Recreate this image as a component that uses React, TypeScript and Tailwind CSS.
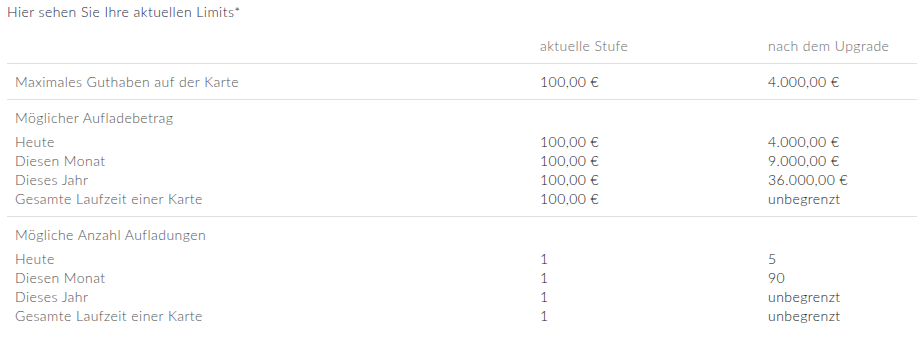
const groups = [
  {
    title: "Möglicher Aufladebetrag",
    rows: [
      ["Heute", "100,00 €", "4.000,00 €"],
      ["Diesen Monat", "100,00 €", "9.000,00 €"],
      ["Dieses Jahr", "100,00 €", "36.000,00 €"],
      ["Gesamte Laufzeit einer Karte", "100,00 €", "unbegrenzt"],
    ],
  },
  {
    title: "Mögliche Anzahl Aufladungen",
    rows: [
      ["Heute", "1", "5"],
      ["Diesen Monat", "1", "90"],
      ["Dieses Jahr", "1", "unbegrenzt"],
      ["Gesamte Laufzeit einer Karte", "1", "unbegrenzt"],
    ],
  },
];

const cols = "grid grid-cols-[525px_228px_1fr]";

export default function App() {
  return (
    <div className="min-h-[355px] bg-white font-['Lato','Liberation_Sans',sans-serif] font-light text-[14px] leading-[19px] tracking-[0.45px]">
      <div className="pl-[7px] pt-[2px] text-[#1f2a44]">Hier sehen Sie Ihre aktuellen Limits*</div>

      <div className="ml-[7px] mt-[7px]">
        <div className={`${cols} border-b border-[#e0e0e0] py-2 text-[#6a6a6a]`}>
          <div className="pl-2" />
          <div className="pl-2">aktuelle Stufe</div>
          <div className="pl-2">nach dem Upgrade</div>
        </div>

        <div className={`${cols} border-b border-[#e0e0e0] py-2`}>
          <div className="pl-2 text-[#555]">Maximales Guthaben auf der Karte</div>
          <div className="pl-2 text-[#1a1a1a]">100,00 €</div>
          <div className="pl-2 text-[#1a1a1a]">4.000,00 €</div>
        </div>

        {groups.map((g, i) => (
          <div key={g.title} className={`py-2 ${i === 0 ? "border-b border-[#e0e0e0]" : ""}`}>
            <div className="pl-2 text-[#555] mb-[5px]">{g.title}</div>
            {g.rows.map((r) => (
              <div key={r[0]} className={cols}>
                <div className="pl-2 text-[#555]">{r[0]}</div>
                <div className="pl-2 text-[#1a1a1a]">{r[1]}</div>
                <div className="pl-2 text-[#1a1a1a]">{r[2]}</div>
              </div>
            ))}
          </div>
        ))}
      </div>
    </div>
  );
}
